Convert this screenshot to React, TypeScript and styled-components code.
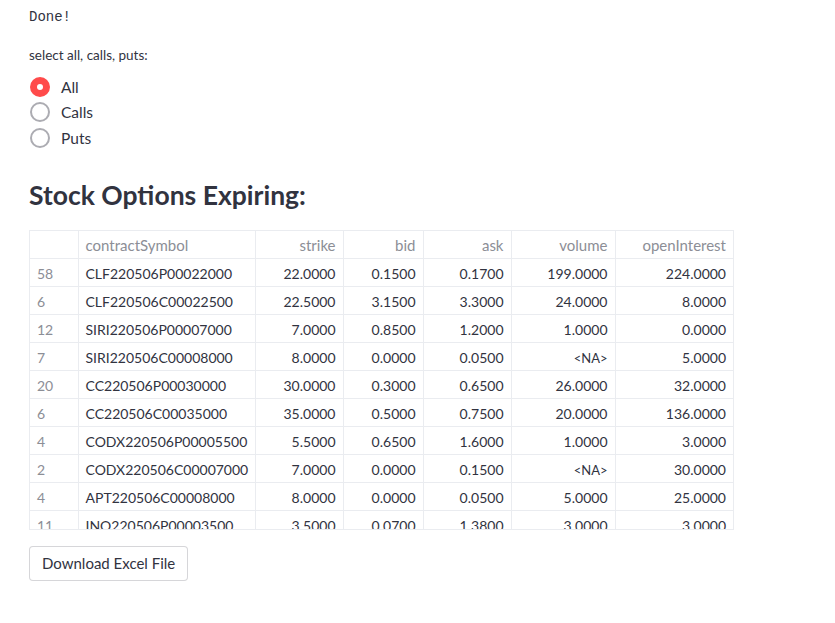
import React, { useState } from "react";
import styled, { createGlobalStyle } from "styled-components";

const Global = createGlobalStyle`
  html, body { margin: 0; padding: 0; background: #ffffff; }
  body { font-family: Lato, "Liberation Sans", sans-serif; color: rgb(49, 51, 63); }
  * { box-sizing: border-box; }
`;

const Main = styled.main`
  display: flex;
  flex-direction: column;
  align-items: flex-start;
  padding: 7px 0 40px 29px;
  width: 835px;
`;

const MonoText = styled.div`
  font-family: "Liberation Mono", "DejaVu Sans Mono", monospace;
  font-size: 14px;
  line-height: 20px;
  color: rgb(49, 51, 63);
`;

const FieldLabel = styled.div`
  margin-top: 18px;
  font-size: 13.5px;
  line-height: 20px;
  color: rgb(49, 51, 63);
`;

const RadioGroup = styled.div`
  display: flex;
  flex-direction: column;
  margin-top: 9px;
`;

const RadioRow = styled.label`
  display: flex;
  align-items: center;
  gap: 11px;
  height: 25.5px;
  font-size: 15.5px;
  cursor: pointer;
`;

const RadioDot = styled.span<{ $checked: boolean }>`
  width: 20px;
  height: 20px;
  margin-left: 1px;
  border-radius: 50%;
  display: flex;
  align-items: center;
  justify-content: center;
  background: ${(p) => (p.$checked ? "rgb(255, 75, 75)" : "#ffffff")};
  border: 2px solid ${(p) => (p.$checked ? "rgb(255, 75, 75)" : "rgb(172, 172, 178)")};
  &::after {
    content: "";
    width: 6px;
    height: 6px;
    border-radius: 50%;
    background: #ffffff;
    display: ${(p) => (p.$checked ? "block" : "none")};
  }
`;

const Heading = styled.h3`
  margin: 27px 0 0 0;
  font-size: 26.5px;
  line-height: 34px;
  font-weight: 700;
  color: rgb(49, 51, 63);
`;

const TableFrame = styled.div`
  margin-top: 18px;
  width: 705px;
  height: 300px;
  border: 1px solid rgb(234, 236, 240);
  overflow: hidden;
`;

const Table = styled.table`
  border-collapse: collapse;
  table-layout: fixed;
  width: 703px;
  font-size: 14px;
`;

const Cell = styled.td<{ $align?: "left" | "right"; $muted?: boolean; $head?: boolean }>`
  height: 28px;
  padding: 2px 7px 0 7px;
  border-right: 1px solid rgb(234, 236, 240);
  border-bottom: 1px solid rgb(234, 236, 240);
  text-align: ${(p) => p.$align ?? "left"};
  font-size: ${(p) => (p.$head ? "15px" : "14px")};
  color: ${(p) => (p.$head || p.$muted ? "rgb(140, 142, 150)" : "rgb(49, 51, 63)")};
  font-weight: 400;
  white-space: nowrap;
  overflow: hidden;
  &:last-child { border-right: none; }
`;

const NaText = styled.span`
  font-size: 13px;
`;

const Button = styled.button`
  margin-top: 16px;
  height: 35px;
  padding: 0 12px;
  font-family: inherit;
  font-size: 15px;
  color: rgb(49, 51, 63);
  background: #ffffff;
  border: 1px solid rgba(49, 51, 63, 0.2);
  border-radius: 4px;
  cursor: pointer;
`;

const cols = [
  { key: "idx", label: "", width: 48, align: "left" as const },
  { key: "sym", label: "contractSymbol", width: 177, align: "left" as const },
  { key: "strike", label: "strike", width: 88, align: "right" as const },
  { key: "bid", label: "bid", width: 80, align: "right" as const },
  { key: "ask", label: "ask", width: 88, align: "right" as const },
  { key: "volume", label: "volume", width: 104, align: "right" as const },
  { key: "oi", label: "openInterest", width: 118, align: "right" as const },
];

const rows: string[][] = [
  ["58", "CLF220506P00022000", "22.0000", "0.1500", "0.1700", "199.0000", "224.0000"],
  ["6", "CLF220506C00022500", "22.5000", "3.1500", "3.3000", "24.0000", "8.0000"],
  ["12", "SIRI220506P00007000", "7.0000", "0.8500", "1.2000", "1.0000", "0.0000"],
  ["7", "SIRI220506C00008000", "8.0000", "0.0000", "0.0500", "<NA>", "5.0000"],
  ["20", "CC220506P00030000", "30.0000", "0.3000", "0.6500", "26.0000", "32.0000"],
  ["6", "CC220506C00035000", "35.0000", "0.5000", "0.7500", "20.0000", "136.0000"],
  ["4", "CODX220506P00005500", "5.5000", "0.6500", "1.6000", "1.0000", "3.0000"],
  ["2", "CODX220506C00007000", "7.0000", "0.0000", "0.1500", "<NA>", "30.0000"],
  ["4", "APT220506C00008000", "8.0000", "0.0000", "0.0500", "5.0000", "25.0000"],
  ["11", "INO220506P00003500", "3.5000", "0.0700", "1.3800", "3.0000", "3.0000"],
];

export default function App() {
  const [choice, setChoice] = useState("All");
  return (
    <>
      <Global />
      <Main>
        <MonoText>Done!</MonoText>
        <FieldLabel>select all, calls, puts:</FieldLabel>
        <RadioGroup>
          {["All", "Calls", "Puts"].map((o) => (
            <RadioRow key={o} onClick={() => setChoice(o)}>
              <RadioDot $checked={choice === o} />
              {o}
            </RadioRow>
          ))}
        </RadioGroup>
        <Heading>Stock Options Expiring:</Heading>
        <TableFrame>
          <Table>
            <colgroup>
              {cols.map((c) => (
                <col key={c.key} style={{ width: c.width }} />
              ))}
            </colgroup>
            <thead>
              <tr>
                {cols.map((c) => (
                  <Cell as="th" key={c.key} $align={c.align} $head>
                    {c.label}
                  </Cell>
                ))}
              </tr>
            </thead>
            <tbody>
              {rows.map((r, i) => (
                <tr key={i}>
                  {r.map((v, j) => (
                    <Cell key={j} $align={cols[j].align} $muted={j === 0}>
                      {v === "<NA>" ? <NaText>{v}</NaText> : v}
                    </Cell>
                  ))}
                </tr>
              ))}
            </tbody>
          </Table>
        </TableFrame>
        <Button>Download Excel File</Button>
      </Main>
    </>
  );
}
